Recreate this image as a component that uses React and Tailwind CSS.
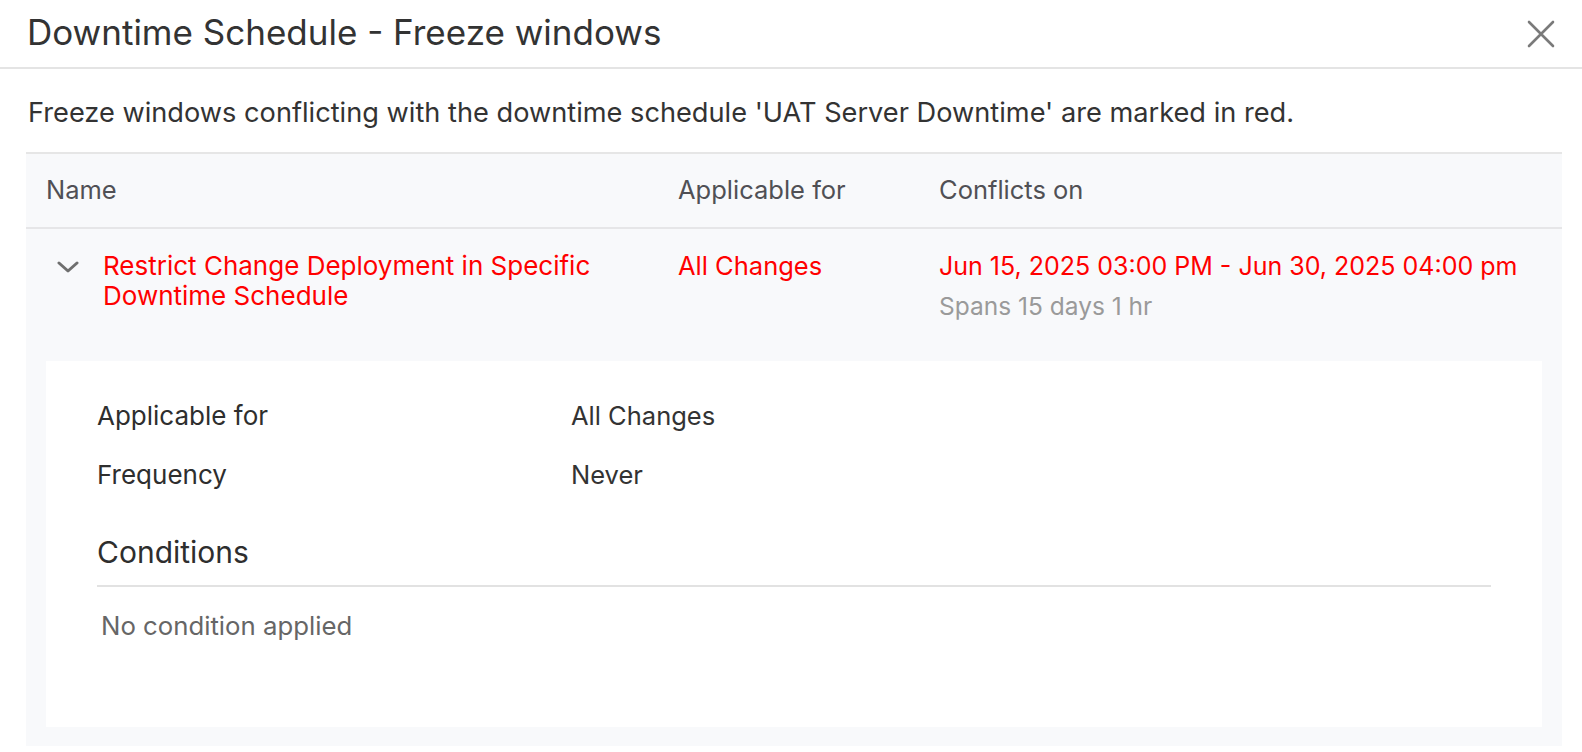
import React from "react";

function Chevron() {
  return (
    <svg width="22" height="14" viewBox="0 0 22 14" className="shrink-0">
      <path d="M2 3 L11 11 L20 3" fill="none" stroke="#6f6f6f" strokeWidth="3" strokeLinecap="round" strokeLinejoin="round" />
    </svg>
  );
}

function CloseX() {
  return (
    <svg width="28" height="28" viewBox="0 0 28 28">
      <path d="M2 2 L26 26 M26 2 L2 26" stroke="#7a7a7a" strokeWidth="2.6" strokeLinecap="round" />
    </svg>
  );
}

export default function App() {
  return (
    <div className="w-[1582px] h-[752px] bg-white overflow-hidden font-[Inter,'Liberation_Sans',sans-serif] text-[#333]">
      <div className="h-[69px] border-b-2 border-[#e4e4e4] flex items-center justify-between pl-[27px] pr-[27px]">
        <h1 className="text-[35px] leading-none text-[#333] pb-[3px]">Downtime Schedule - Freeze windows</h1>
        <CloseX />
      </div>
      <div className="h-[83px] flex items-center px-[28px] pt-[5px] text-[27.2px] text-[#333]">
        Freeze windows conflicting with the downtime schedule 'UAT Server Downtime' are marked in red.
      </div>
      <div className="ml-[26px] mr-[20px] border-t-2 border-[#e6e6e6] bg-[#f8f9fb]">
        <div className="h-[75px] border-b-2 border-[#e6e6e8] flex items-center text-[25.5px] text-[#505055]">
          <div className="w-[652px] pl-[20px]">Name</div>
          <div className="w-[261px]">Applicable for</div>
          <div>Conflicts on</div>
        </div>
        <div className="h-[132px] flex pt-[22px] text-[25.5px] leading-[30px]">
          <div className="w-[652px] flex pl-[31px]">
            <div className="pt-[9px]"><Chevron /></div>
            <div className="pl-[24px] text-[#ff0000] text-[26px] w-[530px]">
              Restrict Change Deployment in Specific Downtime Schedule
            </div>
          </div>
          <div className="w-[261px] text-[#ff0000]">All Changes</div>
          <div>
            <div className="text-[#ff0000] text-[25px]">Jun 15, 2025 03:00 PM - Jun 30, 2025 04:00 pm</div>
            <div className="mt-[10px] text-[#9a9a9a] text-[24.5px]">Spans 15 days 1 hr</div>
          </div>
        </div>
        <div className="px-[20px] pb-[19px]">
          <div className="h-[366px] bg-white px-[51px] pt-[40px]">
            <div className="grid grid-cols-[474px_1fr] gap-y-[29px] text-[25.5px] leading-[30px]">
              <div className="text-[#2e2e2e] text-[26px]">Applicable for</div>
              <div className="text-[#333]">All Changes</div>
              <div className="text-[#2e2e2e] text-[26px]">Frequency</div>
              <div className="text-[#333]">Never</div>
            </div>
            <div className="mt-[45px] text-[30px] leading-[34px] text-[#2e2e2e] pb-[16px] border-b-2 border-[#e2e2e2]">
              Conditions
            </div>
            <div className="mt-[24px] pl-[4px] text-[25.75px] leading-[30px] text-[#666]">No condition applied</div>
          </div>
        </div>
      </div>
    </div>
  );
}
